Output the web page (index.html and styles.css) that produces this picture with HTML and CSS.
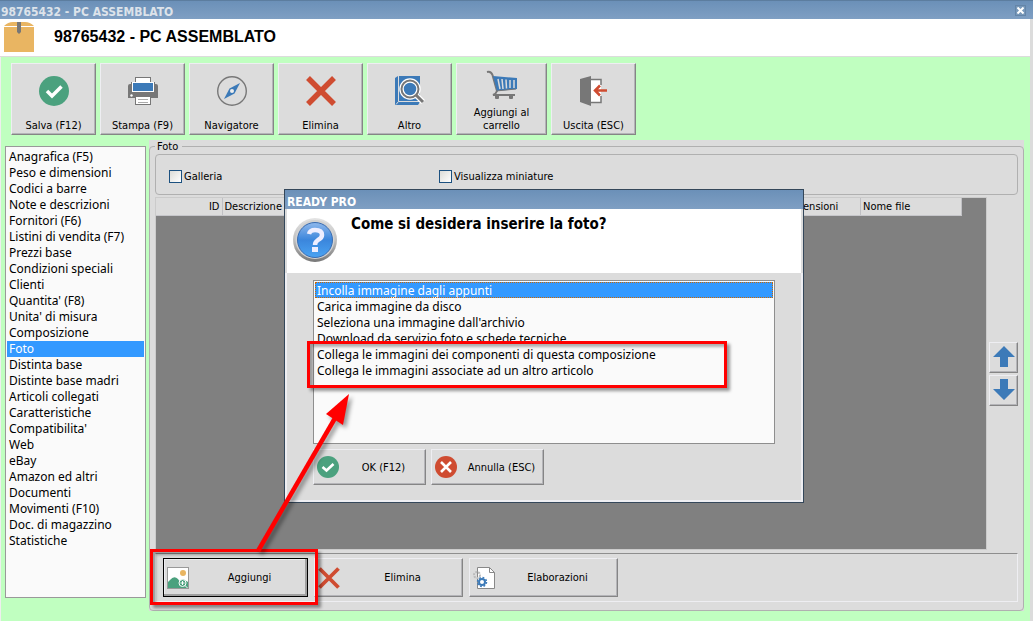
FILE: index.html
```html
<!DOCTYPE html>
<html lang="it">
<head>
    <meta charset="UTF-8">
    <meta name="viewport" content="width=device-width, initial-scale=1.0">
    <title>98765432 - PC ASSEMBLATO</title>
    <link rel="stylesheet" href="styles.css">
</head>
<body>
    <div class="titlebar">
        <span>98765432 - PC ASSEMBLATO</span>
        <button type="button" class="close" aria-label="Chiudi">
            <svg width="7" height="7" viewBox="0 0 7 7"><path d="M0.5 0.5L6.5 6.5M6.5 0.5L0.5 6.5" stroke="#fff" stroke-width="2"/></svg>
        </button>
    </div>

    <header class="header">
        <svg width="32" height="32" viewBox="0 0 32 32">
            <path d="M1 5Q5 1 10 1H22Q27 1 31 5Z" fill="#e9b562"/>
            <rect x="1" y="6" width="30" height="25" fill="#e9b562"/>
            <path d="M14 1H18V11L16 13L14 11Z" fill="#777"/>
        </svg>
        <h1>98765432 - PC ASSEMBLATO</h1>
    </header>

    <div class="window">
        <div class="toolbar">
            <button type="button" class="tool">
                <svg width="32" height="32" viewBox="0 0 32 32"><circle cx="16" cy="16" r="15" fill="#4ba17e"/><path d="M9 16L14 21L23.500 11.500" fill="none" stroke="#fff" stroke-width="3.500"/></svg>
                <span>Salva (F12)</span>
            </button>
            <button type="button" class="tool">
                <svg width="32" height="32" viewBox="0 0 32 32">
                    <path d="M1 11Q1 9 3 9H4V7H28V9H29Q31 9 31 11V23H1Z" fill="#777"/>
                    <rect x="8.500" y="2.500" width="15" height="8" fill="#fff" stroke="#777"/>
                    <rect x="5.500" y="7.500" width="21" height="9" fill="#3c7ab8" stroke="#fff"/>
                    <rect x="8.500" y="21.500" width="15" height="8" fill="#fff" stroke="#777"/>
                    <path d="M11 24.500H21M11 27.500H21" stroke="#aaa"/><circle cx="4.500" cy="20.500" r="1.200" fill="#fff"/>
                </svg>
                <span>Stampa (F9)</span>
            </button>
            <button type="button" class="tool">
                <svg width="32" height="32" viewBox="0 0 32 32"><circle cx="16" cy="16" r="14.300" fill="none" stroke="#777" stroke-width="1.400"/><path d="M24 8L18.500 18.500L8 24L13.500 13.500Z" fill="#3c7ab8"/><circle cx="16" cy="16" r="2" fill="#eee"/></svg>
                <span>Navigatore</span>
            </button>
            <button type="button" class="tool">
                <svg width="32" height="32" viewBox="0 0 32 32"><path d="M3 3L29 29M29 3L3 29" stroke="#cf4c31" stroke-width="5.500"/></svg>
                <span>Elimina</span>
            </button>
            <button type="button" class="tool">
                <svg width="32" height="32" viewBox="0 0 32 32">
                    <path d="M1 3L4 1H26V27L24 30H1Z" fill="#3c7ab8"/>
                    <path d="M4.500 1V26.500H26M4.500 26.500L2 29.500" fill="none" stroke="#dcdcdc"/>
                    <circle cx="16" cy="14" r="8.500" fill="#3c7ab8" stroke="#fff" stroke-width="4.500"/>
                    <path d="M22 20L29 27" stroke="#fff" stroke-width="5.500"/>
                    <circle cx="16" cy="14" r="8.500" fill="none" stroke="#777" stroke-width="2"/>
                    <path d="M22 20L29 27" stroke="#777" stroke-width="3"/>
                </svg>
                <span>Altro</span>
            </button>
            <button type="button" class="tool wide">
                <svg width="32" height="32" viewBox="0 0 32 32">
                    <path d="M1 3Q5 2 6.500 6L11 22Q10 25 7 26H29" fill="none" stroke="#777" stroke-width="2"/>
                    <path d="M7 7L31 9V20L11 22Z" fill="#3c7ab8"/>
                    <path d="M12 10L14 20M16 10L17 20M20 10.500L20.500 19.500M24 11V19M28 11V19" stroke="#dcdcdc" stroke-width="1.500"/>
                    <path d="M10 22L30 20" stroke="#777"/>
                    <rect x="9" y="26" width="4" height="4" rx="1" fill="#777"/><rect x="23" y="26" width="4" height="4" rx="1" fill="#777"/>
                </svg>
                <span>Aggiungi al<br>carrello</span>
            </button>
            <button type="button" class="tool">
                <svg width="32" height="32" viewBox="0 0 32 32">
                    <rect x="12" y="4" width="11" height="23" fill="#fff"/>
                    <path d="M12 4.500H23V10M23 21V27.500H12" fill="none" stroke="#777" stroke-width="1.500"/>
                    <path d="M2 4L13 1V31L2 27Z" fill="#777"/>
                    <path d="M29 15.500H17M22 10.500L17 15.500L22 20.500" fill="none" stroke="#cf4c31" stroke-width="2.500"/>
                </svg>
                <span>Uscita (ESC)</span>
            </button>
        </div>

        <div class="content">
            <nav class="menu">
                <a href="#">Anagrafica (F5)</a>
                <a href="#">Peso e dimensioni</a>
                <a href="#">Codici a barre</a>
                <a href="#">Note e descrizioni</a>
                <a href="#">Fornitori (F6)</a>
                <a href="#">Listini di vendita (F7)</a>
                <a href="#">Prezzi base</a>
                <a href="#">Condizioni speciali</a>
                <a href="#">Clienti</a>
                <a href="#">Quantita' (F8)</a>
                <a href="#">Unita' di misura</a>
                <a href="#">Composizione</a>
                <a href="#" class="attivo">Foto</a>
                <a href="#">Distinta base</a>
                <a href="#">Distinte base madri</a>
                <a href="#">Articoli collegati</a>
                <a href="#">Caratteristiche</a>
                <a href="#">Compatibilita'</a>
                <a href="#">Web</a>
                <a href="#">eBay</a>
                <a href="#">Amazon ed altri</a>
                <a href="#">Documenti</a>
                <a href="#">Movimenti (F10)</a>
                <a href="#">Doc. di magazzino</a>
                <a href="#">Statistiche</a>
            </nav>

            <main class="panel">
                <fieldset class="foto">
                    <legend>Foto</legend>
                    <div class="options">
                        <label for="galleria"><input type="checkbox" id="galleria">Galleria</label>
                        <label for="miniature"><input type="checkbox" id="miniature">Visualizza miniature</label>
                    </div>
                    <div class="grid-row">
                        <div class="grid">
                            <table>
                                <thead>
                                    <tr>
                                        <th class="col-id">ID</th>
                                        <th class="col-desc">Descrizione</th>
                                        <th class="col-dim">Dimensioni</th>
                                        <th class="col-file">Nome file</th>
                                    </tr>
                                </thead>
                            </table>
                        </div>
                        <div class="order">
                            <button type="button" aria-label="Sposta su"><svg width="22" height="22" viewBox="0 0 22 22"><path d="M11 0L22 11H15V21H7V11H0Z" fill="#3c7ab8"/></svg></button>
                            <button type="button" aria-label="Sposta giù"><svg width="22" height="22" viewBox="0 0 22 22"><path d="M11 21L22 10H15V0H7V10H0Z" fill="#3c7ab8"/></svg></button>
                        </div>
                    </div>
                    <div class="actions">
                        <button type="button" class="action predefinito">
                            <svg width="22" height="22" viewBox="0 0 22 22">
                                <rect x="0.500" y="0.500" width="21" height="21" fill="#fff" stroke="#999"/>
                                <circle cx="16" cy="6" r="3" fill="#e9b562"/>
                                <path d="M1 21V15Q2 14 3 13Q7 8 11 12L13 15V21Z" fill="#4ba17e"/>
                                <path d="M12 21V15L16 12L21 15V21Z" fill="#4ba17e"/>
                                <circle cx="15.500" cy="16" r="3.500" fill="#4ba17e" stroke="#fff"/><path d="M13.500 16H17.500M15.500 14V18M18 18.500L20.500 21" stroke="#fff"/>
                            </svg>
                            <span>Aggiungi</span>
                        </button>
                        <button type="button" class="action">
                            <svg width="22" height="22" viewBox="0 0 22 22"><path d="M1.500 1.500L20.500 20.500M20.500 1.500L1.500 20.500" stroke="#cf4c31" stroke-width="3.800"/></svg>
                            <span>Elimina</span>
                        </button>
                        <button type="button" class="action">
                            <svg width="22" height="22" viewBox="0 0 22 22">
                                <path d="M4.500 0.500H16.500L21.500 5.500V21.500H4.500Z" fill="#fff" stroke="#888"/><path d="M16.500 0.500V5.500H21.500" fill="none" stroke="#888"/>
                                <circle cx="4" cy="8" r="3" fill="none" stroke="#bbb" stroke-width="2" stroke-dasharray="2 1"/>
                                <circle cx="9" cy="15" r="3" fill="none" stroke="#3c7ab8" stroke-width="2"/>
                                <circle cx="9" cy="15" r="4.500" fill="none" stroke="#3c7ab8" stroke-width="1.500" stroke-dasharray="1.800 1.730"/>
                            </svg>
                            <span>Elaborazioni</span>
                        </button>
                    </div>
                </fieldset>
            </main>
        </div>
    </div>

    <div class="dialog" role="dialog" aria-labelledby="domanda">
        <div class="dialog-title">READY PRO</div>
        <div class="dialog-head">
            <svg width="46" height="46" viewBox="0 0 46 46">
                <defs>
                    <linearGradient id="anello" x1="0" y1="0" x2="0" y2="1"><stop offset="0" stop-color="#e4e4e4"/><stop offset="0.500" stop-color="#c0c0c0"/><stop offset="1" stop-color="#777"/></linearGradient>
                    <linearGradient id="blu" x1="0" y1="0" x2="0" y2="1"><stop offset="0" stop-color="#8fb8ec"/><stop offset="0.500" stop-color="#3b86dc"/><stop offset="1" stop-color="#4aa3f2"/></linearGradient>
                </defs>
                <circle cx="23" cy="23" r="22" fill="url(#anello)"/>
                <circle cx="23" cy="22.500" r="19.500" fill="#d2d2d2"/>
                <circle cx="23" cy="23" r="17.500" fill="url(#blu)" stroke="#3a6cb0"/>
                <path d="M17 17Q18 13 23 13Q30 13 30 18Q30 21 26 23Q23 25 23 28" fill="none" stroke="#eef" stroke-width="4.500"/>
                <rect x="20" y="30" width="6" height="5" fill="#eef"/>
            </svg>
            <h2 id="domanda">Come si desidera inserire la foto?</h2>
        </div>
        <div class="dialog-body">
            <select class="scelte" size="10" aria-labelledby="domanda">
                <option selected>Incolla immagine dagli appunti</option>
                <option>Carica immagine da disco</option>
                <option>Seleziona una immagine dall'archivio</option>
                <option>Download da servizio foto e schede tecniche</option>
                <option>Collega le immagini dei componenti di questa composizione</option>
                <option>Collega le immagini associate ad un altro articolo</option>
            </select>
            <div class="dialog-buttons">
                <button type="button" class="action">
                    <svg width="22" height="22" viewBox="0 0 22 22"><circle cx="11" cy="11" r="11" fill="#4ba17e"/><path d="M5.500 11L9.500 14.500L16.500 8" fill="none" stroke="#fff" stroke-width="2.600"/></svg>
                    <span>OK (F12)</span>
                </button>
                <button type="button" class="action">
                    <svg width="22" height="22" viewBox="0 0 22 22"><circle cx="11" cy="11" r="11" fill="#cf4c31"/><path d="M6 6L16 16M16 6L6 16" stroke="#fff" stroke-width="2.600"/></svg>
                    <span>Annulla (ESC)</span>
                </button>
            </div>
        </div>
    </div>

    <!-- evidenziazioni -->
    <div class="box box-scelte"></div>
    <div class="box box-aggiungi"></div>
    <svg class="freccia" width="110" height="170" viewBox="0 0 110 170">
        <path d="M8 160L88 22" stroke="#f00" stroke-width="4.500"/>
        <path d="M99 3L76 23L93 34Z" fill="#f00"/>
    </svg>
</body>
</html>
```

FILE: styles.css
```css
* {
    box-sizing: border-box;
}
body {
    margin: 0;
    min-height: 100vh;
    display: flex;
    flex-direction: column;
    position: relative;
    font-family: "DejaVu Sans Condensed", Tahoma, sans-serif;
    font-size: 11px;
    color: #000;
    background-color: #dcdcdc;
}
svg {
    display: block;
    flex: none;
}
button {
    font: inherit;
    color: inherit;
    padding: 0;
    background-color: #dcdcdc;
    border: 1px solid #eeeef2;
    border-right-color: #858585;
    border-bottom-color: #858585;
    box-shadow: inset -1px -1px #b4b4b8;
}
.titlebar, .dialog-title {
    display: flex;
    align-items: center;
    justify-content: space-between;
    font-size: 12px;
    font-weight: bold;
    background: linear-gradient(#6b90b8, #7f9fc3);
}
.titlebar {
    height: 19px;
    padding: 3px 7px 0 1px;
    color: #dde3ea;
    border-top: 1px solid #5c7d9f;
}
.close {
    display: grid;
    place-items: center;
    width: 11px;
    height: 11px;
    margin-bottom: 3px;
    background-color: #7898b9;
    border: 1px solid #6485a8;
    box-shadow: none;
}
.header {
    display: flex;
    align-items: center;
    gap: 19px;
    height: 38px;
    margin-right: 3px;
    padding: 0 3px 2px;
    background-color: #fff;
    border-bottom: 1px solid #dcdcdc;
}
.header h1 {
    margin: 0;
    font: bold 16px "Liberation Sans", Arial, sans-serif;
}
.window {
    flex: 1;
    display: flex;
    flex-direction: column;
    gap: 5px;
    margin-right: 3px;
    padding: 6px 6px 10px 4px;
    background-color: #c0ffc0;
    border-left: 1px solid #eee;
}
.toolbar {
    display: flex;
    gap: 4px;
    padding-left: 6px;
}
.tool {
    display: flex;
    flex-direction: column;
    align-items: center;
    justify-content: space-between;
    width: 85px;
    height: 72px;
    padding: 11px 0 2px;
    line-height: 13px;
}
.tool.wide {
    width: 91px;
    padding-top: 5px;
}
.content {
    flex: 1;
    display: flex;
    gap: 3px;
}
.menu {
    width: 141px;
    margin: 6px 0 13px;
    padding: 2px 1px;
    font-family: "Noto Sans", Tahoma, sans-serif;
    font-size: 12px;
    background-color: #fafafa;
    border: 1px solid #999;
}
.menu a {
    display: block;
    height: 16px;
    padding-left: 2px;
    line-height: 16px;
    color: #000;
    text-decoration: none;
}
.menu .attivo {
    color: #fff;
    background-color: #3399ff;
}
.panel {
    flex: 1;
    display: flex;
    background-color: #dcdcdc;
}
.foto {
    flex: 1;
    display: flex;
    flex-direction: column;
    min-width: 0;
    margin: 0;
    padding: 1px 5px 8px;
    border: 1px solid #b0b0b0;
    border-radius: 4px;
}
.foto legend {
    padding: 0 4px 0 2px;
    line-height: 13px;
}
.options {
    display: flex;
    align-items: center;
    height: 41px;
    padding: 4px 13px 0;
    border: 1px solid #b0b0b0;
    border-radius: 4px;
}
.options label {
    display: flex;
    align-items: center;
    gap: 2px;
    width: 270px;
}
.options input {
    appearance: none;
    width: 13px;
    height: 13px;
    margin: 0;
    background: linear-gradient(135deg, #dcdcd7, #fff);
    border: 1px solid #1c5180;
}
.grid-row {
    flex: 1;
    display: flex;
    gap: 2px;
    margin: 2px 0 3px;
}
.grid {
    flex: 1;
    background-color: #808080;
    border: 1px solid #cbcbcb;
}
.grid table {
    width: 806px;
    table-layout: fixed;
    border-collapse: collapse;
    background-color: #dcdcdc;
}
.grid th {
    height: 17px;
    padding: 0 2px;
    line-height: 15px;
    font-weight: normal;
    text-align: left;
    border-right: 1px solid #c0c0c4;
    border-bottom: 1px solid #c6c6ca;
}
.grid .col-id {
    width: 66px;
    text-align: right;
}
.grid .col-dim {
    width: 80px;
}
.grid .col-file {
    width: 101px;
}
.order {
    display: flex;
    flex-direction: column;
    justify-content: center;
    gap: 2px;
}
.order button {
    display: grid;
    place-items: center;
    width: 29px;
    height: 31px;
}
.actions {
    display: flex;
    gap: 6px;
    padding: 4px 7px;
    border: 1px solid #eeeef2;
    border-top-color: #8e8e8e;
}
.action {
    display: flex;
    align-items: center;
    width: 149px;
    height: 39px;
    padding: 0 3px;
}
.action span {
    flex: 1;
    padding-left: 6px;
}
.action.predefinito {
    width: 145px;
    border-color: #000;
    box-shadow: inset -2px -2px #a0a0a0, inset 1px 1px #eeeef2;
}
.dialog {
    position: absolute;
    left: 284px;
    top: 189px;
    width: 520px;
    background-color: #dcdcdc;
    border: 1px solid #34475a;
}
.dialog-title {
    height: 19px;
    padding: 4px 2px 0;
    color: #fff;
}
.dialog-head {
    display: flex;
    gap: 13px;
    height: 64px;
    margin: 0 2px;
    padding: 8px 5px;
    background-color: #fff;
}
.dialog-head h2 {
    margin: 0;
    font-size: 15px;
    line-height: 14px;
}
.dialog-body {
    padding: 7px 26px 15px;
    border: 2px solid #eeeef2;
    border-top: 0;
}
.scelte {
    display: block;
    width: 100%;
    height: 164px;
    padding: 1px;
    font-family: "Noto Sans", Tahoma, sans-serif;
    font-size: 12px;
    background-color: #fafafa;
    border: 1px solid #8e8e8e;
    border-radius: 0;
    outline: none;
    overflow: hidden;
}
.scelte option {
    height: 16px;
    min-height: 16px;
    padding: 0 2px;
    line-height: 16px;
    color: #000;
}
.scelte option:checked {
    color: #fff;
    background: #3399ff linear-gradient(#3399ff, #3399ff);
    outline: 1px dotted #cc6600;
    outline-offset: -1px;
}
.dialog-buttons {
    display: flex;
    gap: 5px;
    margin-top: 5px;
}
.dialog-buttons .action {
    width: 113px;
    height: 36px;
}
.box {
    position: absolute;
    border: 3px solid #f00;
    box-shadow: 3px 3px 3px rgba(0, 0, 0, 0.4), inset 3px 3px 3px rgba(0, 0, 0, 0.3);
}
.box-scelte {
    left: 307px;
    top: 341px;
    width: 420px;
    height: 47px;
}
.box-aggiungi {
    left: 150px;
    top: 549px;
    width: 168px;
    height: 56px;
}
.freccia {
    position: absolute;
    left: 250px;
    top: 391px;
    filter: drop-shadow(3px 3px 2px rgba(0, 0, 0, 0.4));
}
```
